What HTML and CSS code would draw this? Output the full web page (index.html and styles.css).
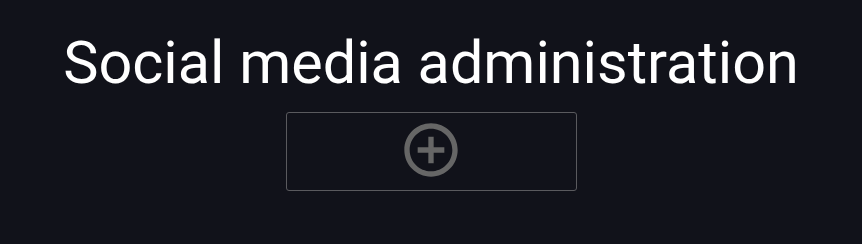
FILE: index.html
```html
<!DOCTYPE html>
<html lang="en">
<head>
<meta charset="utf-8">
<title>Social media administration</title>
<link rel="stylesheet" href="styles.css">
</head>
<body>
<main class="page">
  <h1 class="title">Social media administration</h1>
  <button class="add-btn" type="button" aria-label="Add">
    <svg class="add-icon" viewBox="0 0 24 24" width="64" height="64" aria-hidden="true">
      <path fill="currentColor" d="M13 7h-2v4H7v2h4v4h2v-4h4v-2h-4V7zm-1-5C6.48 2 2 6.48 2 12s4.48 10 10 10 10-4.48 10-10S17.52 2 12 2zm0 18c-4.41 0-8-3.59-8-8s3.59-8 8-8 8 3.59 8 8-3.59 8-8 8z"/>
    </svg>
  </button>
</main>
</body>
</html>
```
FILE: styles.css
```css
html, body {
  margin: 0;
  padding: 0;
  background: #11121a;
  height: 100%;
}
body {
  font-family: Roboto, "Liberation Sans", sans-serif;
  color: #ffffff;
}
.page {
  display: flex;
  flex-direction: column;
  align-items: center;
  padding-top: 28px;
}
.title {
  margin: 0;
  font-size: 59.35px;
  font-weight: 400;
  line-height: 70px;
  white-space: nowrap;
}
.add-btn {
  margin-top: 14px;
  width: 291px;
  height: 79px;
  box-sizing: border-box;
  border: 1px solid #5a5a5e;
  border-radius: 3px;
  background: transparent;
  display: flex;
  align-items: center;
  justify-content: center;
  padding: 0 0 3px 0;
  color: #666666;
  cursor: pointer;
}
.add-icon {
  display: block;
}
```
